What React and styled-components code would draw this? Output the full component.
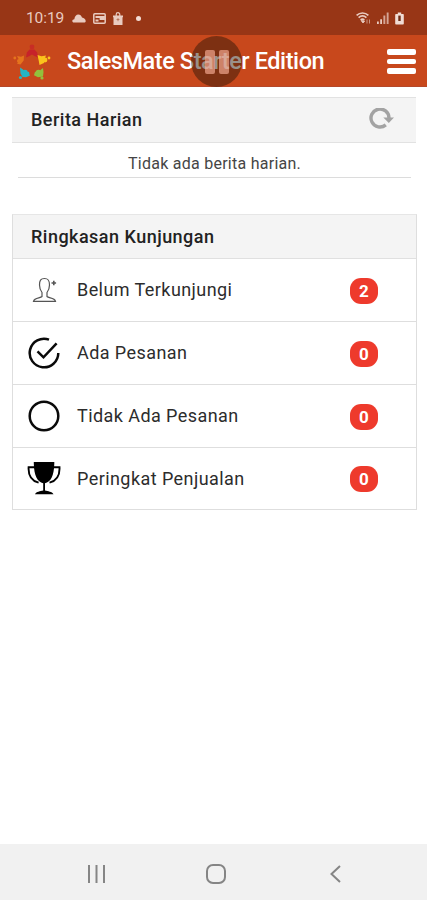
import React from "react";
import styled, {createGlobalStyle} from "styled-components";

const GlobalStyle = createGlobalStyle`
    * {
        box-sizing: border-box;
    }

    body {
        margin: 0;
        background-color: #fff;
        font-family: Roboto, "Liberation Sans", sans-serif;
    }
`;

const Screen = styled.div`
    display: flex;
    flex-direction: column;
    width: 427px;
    height: 900px;
    overflow: hidden;
    background-color: #fff;
`;

const StatusBar = styled.div`
    flex: none;
    display: flex;
    align-items: center;
    justify-content: space-between;
    height: 35px;
    padding: 1px 23px 0 26px;
    background-color: #983616;
    color: #e9cbc0;
`;

const StatusGroup = styled.div`
    display: flex;
    align-items: center;
    gap: ${({$gap}) => $gap}px;
`;

const Clock = styled.span`
    margin-right: 1px;
    font-size: 15.5px;
    letter-spacing: -0.1px;
    line-height: 18px;
`;

const Dot = styled.span`
    width: 5px;
    height: 5px;
    margin-left: 6px;
    border-radius: 50%;
    background-color: #f3ddd5;
`;

const Header = styled.header`
    flex: none;
    position: relative;
    display: flex;
    align-items: center;
    height: 52px;
    padding: 0 11px 0 12px;
    background-color: #c8481c;
    border-bottom: 1px solid #b5482a;
`;

const Title = styled.h1`
    flex: 1;
    margin: 0 0 0 15px;
    color: #fff;
    font-size: 23.5px;
    font-weight: 500;
    line-height: 28px;
    letter-spacing: -0.42px;
    white-space: nowrap;
`;

const MenuButton = styled.button`
    display: flex;
    flex-direction: column;
    gap: 4px;
    padding: 0;
    margin-top: 2px;
    border: 0;
    background: none;

    span {
        width: 29px;
        height: 5.5px;
        border-radius: 2px;
        background-color: #fff;
    }
`;

const PauseBubble = styled.div`
    position: absolute;
    top: 1px;
    left: 191px;
    display: flex;
    align-items: center;
    justify-content: center;
    gap: 4px;
    width: 51px;
    height: 51px;
    border-radius: 50%;
    background-color: rgba(44, 22, 8, 0.48);

    span {
        width: 10px;
        height: 24px;
        border-radius: 2px;
        background-color: rgba(255, 180, 158, 0.62);
    }
`;

const Content = styled.main`
    flex: 1;
    padding: 10px 10px 0 12px;
`;

const NewsHeader = styled.div`
    display: flex;
    align-items: center;
    justify-content: space-between;
    width: 404px;
    height: 46px;
    padding: 0 22px 0 19px;
    background-color: #f4f4f4;
    border-top: 1px solid #e2e2e2;
    border-bottom: 1px solid #e2e2e2;
`;

const PanelTitle = styled.h2`
    margin: 0;
    color: #222;
    font-size: 18px;
    font-weight: 500;
    line-height: 22px;
    letter-spacing: 0.48px;
`;

const NewsText = styled.p`
    width: 393px;
    height: 35px;
    margin: 0 0 36px 6px;
    padding-top: 11px;
    border-bottom: 1px solid #dcdcdc;
    color: #454545;
    font-size: 16px;
    line-height: 20px;
    letter-spacing: 0.26px;
    text-align: center;
`;

const Panel = styled.section`
    width: 405px;
    border: 1px solid #dedede;
    border-top-color: #e6e6e6;
`;

const PanelHeader = styled.div`
    display: flex;
    align-items: center;
    height: 44px;
    padding: 1px 18px 0;
    background-color: #f4f4f4;
    border-bottom: 1px solid #e0e0e0;
`;

const Row = styled.div`
    display: flex;
    align-items: center;
    height: 63px;
    padding: 0 38px 0 14px;
    border-bottom: 1px solid #dedede;

    &:last-child {
        height: 61px;
        border-bottom: 0;
    }
`;

const RowIcon = styled.span`
    display: flex;
    width: 34px;
    height: 34px;
    margin-right: 16px;
`;

const RowLabel = styled.span`
    flex: 1;
    color: #2c2c2c;
    font-size: 18px;
    line-height: 22px;
    letter-spacing: 0.43px;
`;

const Badge = styled.span`
    display: flex;
    align-items: center;
    justify-content: center;
    width: 28px;
    height: 26px;
    margin-top: 1px;
    border-radius: 11px;
    background-color: #ee3a2c;
    color: #fff;
    font-size: 17px;
    font-weight: 700;
    line-height: 20px;
`;

const NavBar = styled.nav`
    flex: none;
    display: flex;
    align-items: center;
    justify-content: space-between;
    height: 56px;
    padding: 3px 83px 0 87px;
    background-color: #f1f1f1;
    color: #858585;
`;

const CloudIcon = () => (
    <svg width="14" height="9" viewBox="0 0 14 9" fill="currentColor">
        <path d="M2 8.500C.8 8.500.3 7.800.3 7c0-1.100.9-1.700 2-1.800C2.900 2 4.300.5 6.300.5c1.900 0 3 1.200 3.700 3 2 .6 3.700 1.700 3.700 3.400 0 1-.7 1.600-1.700 1.600z"/>
    </svg>
);

const CardIcon = () => (
    <svg width="13" height="11" viewBox="0 0 13 11" fill="none" stroke="currentColor">
        <rect x=".8" y=".8" width="11.400" height="9.400" rx="1" strokeWidth="1.500"/>
        <path d="M2.500 4h4.500M2.500 7.500h3M7.500 4h3.500v2H7.500z" strokeWidth="1.800"/>
    </svg>
);

const BagIcon = () => (
    <svg width="10" height="13" viewBox="0 0 10 13">
        <path d="M3.200 4V2.500a1.800 1.800 0 0 1 3.600 0V4" fill="none" stroke="currentColor" strokeWidth="1.200"/>
        <path d="M0 3.600h10v1.600H9.500V13H.5V5.200H0z" fill="currentColor"/>
        <path d="M3.600 7.500h2.800M5 6.200v3" stroke="#b9765f"/>
    </svg>
);

const WifiIcon = () => (
    <svg width="15" height="12" viewBox="0 0 15 12" fill="none" stroke="currentColor">
        <path d="M.6 3.300C4 .2 9 .2 12.400 3.300M2.600 5.600c2.400-2.100 5.400-2.100 7.800 0M4.600 7.900c1.200-1 2.600-1 3.800 0" strokeWidth="1.700"/>
        <path d="M5.200 8.600L7 11l1.600-2z" fill="currentColor" strokeWidth=".9"/>
        <path d="M11 7.500v4M13.500 7.500v4" strokeWidth=".9" opacity=".7"/>
    </svg>
);

const SignalIcon = () => (
    <svg width="12" height="12" viewBox="0 0 12 12" fill="currentColor">
        <path d="M0 9.500h1.800V12H0zM3.200 7.200H5V12H3.200z"/>
        <path d="M6.400 3.500h1.900V12H6.400zM9.700.5h1.900V12H9.700z" opacity=".75"/>
    </svg>
);

const BatteryIcon = () => (
    <svg width="9" height="13" viewBox="0 0 9 13">
        <path d="M2.800.5h3.400v1.400H8a.8.8 0 0 1 .8.8v9a.8.8 0 0 1-.8.8H1a.8.8 0 0 1-.8-.8v-9a.8.8 0 0 1 .8-.8h1.800z" fill="#f0dcd4"/>
        <path d="M3.300 3.600h2.400v5.400H3.300z" fill="#6e2a14"/>
    </svg>
);

// five little figures standing in a ring, holding the points of a star
const Logo = () => (
    <svg width="40" height="40" viewBox="0 0 40 40">
        <g fill="#c7222a">
            <circle cx="20" cy="6" r="2.400" opacity=".7"/>
            <path d="M14 16.500l.8-5 2.700-3h5l2.700 3 .8 5-3.500-1.500-2.500-1.500-2.500 1.500z"/>
        </g>
        <g fill="#e5741d">
            <circle cx="2.800" cy="17" r="1.400"/>
            <circle cx="7" cy="20" r="2"/>
            <path d="M5 15l4 .8 3-1.300-.3 5-3.200 4-3.500-.8 2.500-3z"/>
        </g>
        <g fill="#fbc31c">
            <circle cx="37" cy="17" r="1.400"/>
            <circle cx="33" cy="19" r="2.400"/>
            <path d="M25.500 14l4 1.300 4.500-.8-1.500 3.500-.5 4-4.500 2-.8-4.500z"/>
        </g>
        <g fill="#25b5c4">
            <circle cx="8.500" cy="36.500" r="1.600"/>
            <circle cx="13" cy="31.500" r="2.800"/>
            <path d="M8 26.500l3 2 2.500 3 3.500-.8.8 4-3.800 1.500-3.500-.3-2-3.400z"/>
        </g>
        <g fill="#92c13d">
            <circle cx="30" cy="37" r="1.600"/>
            <circle cx="26.500" cy="31.500" r="2.800"/>
            <path d="M31 27l-2.500 2-2 2.500-3.500-.8-1 3.500 4 2 5-.7.500-4.500z"/>
        </g>
    </svg>
);

const ReloadIcon = () => (
    <svg width="25" height="24" viewBox="0 0 25 24">
        <path d="M16.800 16.900A9 9 0 1 1 20 10" fill="none" stroke="#a3a3a3" strokeWidth="3.400"/>
        <path d="M14.300 9.500H25L19.800 15z" fill="#a3a3a3"/>
    </svg>
);

const PersonIcon = () => (
    <svg width="34" height="34" viewBox="0 0 34 34" fill="none" stroke="#555" strokeWidth="1.200">
        <path d="M15 23.500v-4c-1.500-2-2.500-4-2.500-7.500 0-4.500 1-6.500 5-6.500s5 2 5 6.500c0 3.500-1 5.500-2.500 7.500v4c1.500 1.800 7.500 1.200 8.500 4.800H6.500c1-3.600 7-3 8.500-4.800z"/>
        <path d="M26.800 7.700v4.600M24.500 10h4.600" strokeWidth="1.600"/>
    </svg>
);

const CheckCircleIcon = () => (
    <svg width="34" height="34" viewBox="0 0 34 34" fill="none" stroke="#0a0a0a" strokeWidth="2.500">
        <path d="M22 3.600A14.300 14.300 0 1 0 31.300 17M10.500 15.300l6 6L29.600 7.300"/>
    </svg>
);

const CircleIcon = () => (
    <svg width="34" height="34" viewBox="0 0 34 34" fill="none" stroke="#0a0a0a" strokeWidth="2.500">
        <circle cx="17" cy="17" r="14.300"/>
    </svg>
);

const TrophyIcon = () => (
    <svg width="34" height="34" viewBox="0 0 34 34">
        <path d="M6.800 0h20.500v1.500c-.2 12-3.500 18.500-9.300 19.800v7.200c3 .8 7 1 8.500 3.700H8c1.500-2.700 5-2.900 8.200-3.700v-7.200C10.500 20 7 13.500 6.800 1.500z" fill="#000"/>
        <path d="M8 5.300H1.600c-.4 8 3 13.500 10 15.300M26.500 5.300h6c.4 8-3.200 13.500-10 15.300" fill="none" stroke="#000" strokeWidth="1.900"/>
    </svg>
);

const RecentsIcon = () => (
    <svg width="18" height="18" viewBox="0 0 18 18" stroke="currentColor" strokeWidth="2">
        <path d="M2 0v18M9.500 0v18M17 0v18"/>
    </svg>
);

const HomeIcon = () => (
    <svg width="20" height="20" viewBox="0 0 20 20" fill="none" stroke="currentColor" strokeWidth="2">
        <rect x="1" y="1" width="18" height="18" rx="6"/>
    </svg>
);

const BackIcon = () => (
    <svg width="18" height="18" viewBox="0 0 18 18" fill="none" stroke="currentColor" strokeWidth="2">
        <path d="M14 1L5.500 9l8.500 8"/>
    </svg>
);

const visits = [
    {name: "Belum Terkunjungi", count: 2, icon: <PersonIcon/>},
    {name: "Ada Pesanan", count: 0, icon: <CheckCircleIcon/>},
    {name: "Tidak Ada Pesanan", count: 0, icon: <CircleIcon/>},
    {name: "Peringkat Penjualan", count: 0, icon: <TrophyIcon/>},
];

const App = () => (
    <>
        <GlobalStyle/>
        <Screen>
            <StatusBar>
                <StatusGroup $gap={7}>
                    <Clock>10:19</Clock>
                    <CloudIcon/>
                    <CardIcon/>
                    <BagIcon/>
                    <Dot/>
                </StatusGroup>
                <StatusGroup $gap={6}>
                    <WifiIcon/>
                    <SignalIcon/>
                    <BatteryIcon/>
                </StatusGroup>
            </StatusBar>
            <Header>
                <Logo/>
                <Title>SalesMate Starter Edition</Title>
                <MenuButton aria-label="Menu">
                    <span/>
                    <span/>
                    <span/>
                </MenuButton>
                <PauseBubble>
                    <span/>
                    <span/>
                </PauseBubble>
            </Header>
            <Content>
                <NewsHeader>
                    <PanelTitle>Berita Harian</PanelTitle>
                    <ReloadIcon/>
                </NewsHeader>
                <NewsText>Tidak ada berita harian.</NewsText>
                <Panel>
                    <PanelHeader>
                        <PanelTitle>Ringkasan Kunjungan</PanelTitle>
                    </PanelHeader>
                    {visits.map(({name, count, icon}) => (
                        <Row key={name}>
                            <RowIcon>{icon}</RowIcon>
                            <RowLabel>{name}</RowLabel>
                            <Badge>{count}</Badge>
                        </Row>
                    ))}
                </Panel>
            </Content>
            <NavBar>
                <RecentsIcon/>
                <HomeIcon/>
                <BackIcon/>
            </NavBar>
        </Screen>
    </>
);

export default App;
